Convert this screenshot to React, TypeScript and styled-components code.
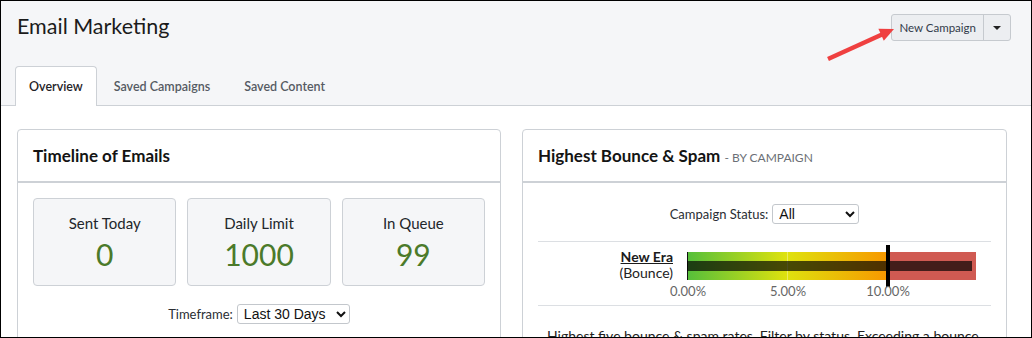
import styled, { createGlobalStyle } from "styled-components";

const GlobalStyle = createGlobalStyle`
	body {
		margin: 0;
		font-family: "Lato", "Noto Sans", sans-serif;
		color: #1d1d1f;
	}
	* {
		box-sizing: border-box;
	}
`;

const Frame = styled.div`
	width: 1032px;
	height: 338px;
	border: 1px solid #000;
	overflow: hidden;
	background: #fff;
	position: relative;
`;

const Header = styled.header`
	background: #f5f6f8;
	border-bottom: 1px solid #cdd1d6;
	position: relative;
`;

const TopRow = styled.div`
	display: flex;
	justify-content: space-between;
	align-items: flex-start;
	padding: 11px 20px 0 16px;
	height: 65px;
`;

const PageTitle = styled.h1`
	margin: 0;
	font-size: 21.5px;
	font-weight: 400;
	line-height: 28px;
	color: #1b1b1b;
`;

const SplitButton = styled.div`
	display: flex;
	margin-top: 2px;
	height: 27px;
	border: 1px solid #c6cacf;
	border-radius: 3px;
	background: #eceef1;
	overflow: hidden;
`;

const ButtonPart = styled.button<{ narrow?: boolean }>`
	all: unset;
	display: flex;
	align-items: center;
	justify-content: center;
	padding: ${props => (props.narrow ? "0" : "0 7px")};
	width: ${props => (props.narrow ? "26px" : "auto")};
	font-size: 11.5px;
	color: #333b4a;
	cursor: pointer;

	& + & {
		border-left: 1px solid #c6cacf;
	}
`;

const Caret = styled.span`
	width: 0;
	height: 0;
	border-left: 4px solid transparent;
	border-right: 4px solid transparent;
	border-top: 4px solid #222;
`;

const Annotation = styled.svg`
	position: absolute;
	left: 820px;
	top: 18px;
	overflow: visible;
`;

const Tabs = styled.nav`
	display: flex;
	padding-left: 14px;
	height: 39px;
	align-items: flex-end;
`;

const Tab = styled.div<{ active?: boolean }>`
	height: ${props => (props.active ? "40px" : "39px")};
	margin-bottom: ${props => (props.active ? "-1px" : "0")};
	padding: 0 ${props => (props.active ? "13px" : "16px")};
	display: flex;
	align-items: center;
	font-size: 12.5px;
	font-weight: 600;
	color: ${props => (props.active ? "#1f2328" : "#555b63")};
	background: ${props => (props.active ? "#fff" : "transparent")};
	border: 1px solid ${props => (props.active ? "#cdd1d6" : "transparent")};
	border-bottom: none;
	border-radius: 4px 4px 0 0;
`;

const Content = styled.main`
	display: grid;
	grid-template-columns: 484px 485px;
	gap: 21px;
	padding: 23px 0 0 16px;
`;

const Card = styled.section`
	border: 1px solid #cdd1d6;
	border-radius: 4px;
	background: #fff;
	height: 260px;
`;

const CardHeader = styled.div`
	height: 53px;
	display: flex;
	align-items: center;
	padding: 0 15px;
	border-bottom: 2px solid #cdd1d6;
`;

const CardTitle = styled.h2`
	margin: 0;
	font-size: 17px;
	font-weight: 700;
	color: #141414;

	small {
		font-size: 12px;
		font-weight: 400;
		color: #6b6f76;
		text-transform: uppercase;
	}
`;

const CardBody = styled.div<{ top: number }>`
	padding: ${props => props.top}px 15px 0;
`;

const StatGrid = styled.div`
	display: grid;
	grid-template-columns: repeat(3, 1fr);
	gap: 11px;
`;

const StatBox = styled.div`
	height: 88px;
	background: #f5f6f8;
	border: 1px solid #cdd1d6;
	border-radius: 4px;
	display: flex;
	flex-direction: column;
	align-items: center;
	padding-top: 14px;

	span {
		font-size: 15px;
		line-height: 20px;
		color: #22262b;
	}

	strong {
		font-size: 30px;
		font-weight: 400;
		line-height: 38px;
		margin-top: 2px;
		color: #4b7a2a;
	}
`;

const FilterRow = styled.div<{ top: number }>`
	display: flex;
	justify-content: center;
	align-items: center;
	gap: 4px;
	margin-top: ${props => props.top}px;

	label {
		font-size: 13px;
		color: #2a2e33;
	}
`;

const Select = styled.select<{ w: number }>`
	width: ${props => props.w}px;
	height: 20px;
	font-family: "Liberation Sans", Arial, sans-serif;
	font-size: 14px;
	color: #111;
	background: #fff;
	border: 1px solid #c3c7cc;
	border-radius: 3px;
	padding: 0 2px;
`;

const Divider = styled.hr<{ top: number }>`
	border: none;
	border-top: 1px solid #dcdfe3;
	margin: ${props => props.top}px 0 0;
`;

const GaugeRow = styled.div`
	display: flex;
	gap: 14px;
	height: 63px;
`;

const GaugeLabel = styled.div`
	width: 135px;
	padding-top: 7px;
	text-align: right;
	font-size: 14px;
	line-height: 16px;

	strong {
		display: block;
		font-weight: 700;
		text-decoration: underline;
		color: #1b1b1b;
	}

	span {
		color: #222;
	}
`;

const Note = styled.p`
	margin: 21px 0 0;
	padding: 0 12px 0 9px;
	font-size: 14px;
	line-height: 18px;
	color: #222;
`;

const stats = [
	{ label: "Sent Today", value: "0" },
	{ label: "Daily Limit", value: "1000" },
	{ label: "In Queue", value: "99" },
];

const PX_PER_PCT = 20;

function BounceGauge({ rate, limit, max }: { rate: number; limit: number; max: number }) {
	const w = max * PX_PER_PCT;
	const lim = limit * PX_PER_PCT;
	return (
		<svg width={w} height={63} style={{ overflow: "visible" }}>
			<defs>
				<linearGradient id="okZone" x1="0" x2="1" y1="0" y2="0">
					<stop offset="0" stopColor="#55bf3b" />
					<stop offset="0.5" stopColor="#dfe20e" />
					<stop offset="1" stopColor="#f79800" />
				</linearGradient>
			</defs>
			<rect x={0} y={10} width={lim} height={28} fill="url(#okZone)" />
			<rect x={lim} y={10} width={w - lim} height={28} fill="#d05a52" />
			<rect x={lim / 2} y={10} width={1} height={28} fill="rgba(255,255,255,0.35)" />
			<rect x={0} y={10} width={1} height={28} fill="#111" />
			<rect x={0} y={19} width={rate * PX_PER_PCT} height={10} fill="rgba(0,0,0,0.68)" />
			<rect x={lim - 1} y={3} width={4} height={42} fill="#000" />
			{[0, 5, 10].map(t => (
				<text
					key={t}
					x={t * PX_PER_PCT + 1}
					y={54}
					textAnchor="middle"
					fontSize={13}
					fill="#666"
					fontFamily="Lato, 'Noto Sans', sans-serif"
				>
					{t.toFixed(2)}%
				</text>
			))}
		</svg>
	);
}

export default function App() {
	return (
		<>
			<GlobalStyle />
			<Frame>
				<Header>
					<TopRow>
						<PageTitle>Email Marketing</PageTitle>
						<SplitButton>
							<ButtonPart>New Campaign</ButtonPart>
							<ButtonPart narrow>
								<Caret />
							</ButtonPart>
						</SplitButton>
					</TopRow>
					<Tabs>
						<Tab active>Overview</Tab>
						<Tab>Saved Campaigns</Tab>
						<Tab>Saved Content</Tab>
					</Tabs>
					<Annotation width={80} height={45}>
						<line x1={7} y1={40} x2={61} y2={15.5} stroke="#ef4040" strokeWidth={4.5} />
						<polygon points="73,10 62.8,21.8 57.4,9.8" fill="#ef4040" />
					</Annotation>
				</Header>
				<Content>
					<Card>
						<CardHeader>
							<CardTitle>Timeline of Emails</CardTitle>
						</CardHeader>
						<CardBody top={15}>
							<StatGrid>
								{stats.map(s => (
									<StatBox key={s.label}>
										<span>{s.label}</span>
										<strong>{s.value}</strong>
									</StatBox>
								))}
							</StatGrid>
							<FilterRow top={18}>
								<label>Timeframe:</label>
								<Select w={113} defaultValue="30">
									<option value="30">Last 30 Days</option>
									<option value="7">Last 7 Days</option>
								</Select>
							</FilterRow>
						</CardBody>
					</Card>
					<Card>
						<CardHeader>
							<CardTitle>
								Highest Bounce &amp; Spam <small>- By Campaign</small>
							</CardTitle>
						</CardHeader>
						<CardBody top={21}>
							<FilterRow top={0}>
								<label>Campaign Status:</label>
								<Select w={87} defaultValue="all">
									<option value="all">All</option>
									<option value="active">Active</option>
								</Select>
							</FilterRow>
							<Divider top={17} />
							<GaugeRow>
								<GaugeLabel>
									<strong>New Era</strong>
									<span>(Bounce)</span>
								</GaugeLabel>
								<BounceGauge rate={14.25} limit={10} max={14.45} />
							</GaugeRow>
							<Divider top={0} />
							<Note>
								Highest five bounce &amp; spam rates. Filter by status. Exceeding a bounce rate of
								10% may affect delivery.
							</Note>
						</CardBody>
					</Card>
				</Content>
			</Frame>
		</>
	);
}
